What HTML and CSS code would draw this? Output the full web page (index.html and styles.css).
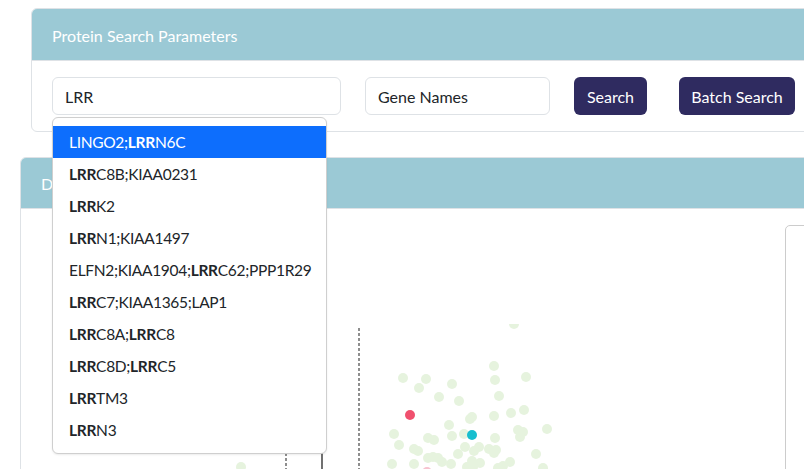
FILE: index.html
```html
<!DOCTYPE html>
<html>
<head>
<meta charset="utf-8">
<link rel="stylesheet" href="styles.css">
</head>
<body>
<div class="page">
  <section class="card card-search">
    <header class="card-header">Protein Search Parameters</header>
    <div class="card-body search-row">
      <div class="field field-main">
        <input class="input" type="text" value="LRR">
        <ul class="dropdown">
          <li class="item active">LINGO2;<b>LRR</b>N6C</li>
          <li class="item"><b>LRR</b>C8B;KIAA0231</li>
          <li class="item"><b>LRR</b>K2</li>
          <li class="item"><b>LRR</b>N1;KIAA1497</li>
          <li class="item">ELFN2;KIAA1904;<b>LRR</b>C62;PPP1R29</li>
          <li class="item"><b>LRR</b>C7;KIAA1365;LAP1</li>
          <li class="item"><b>LRR</b>C8A;<b>LRR</b>C8</li>
          <li class="item"><b>LRR</b>C8D;<b>LRR</b>C5</li>
          <li class="item"><b>LRR</b>TM3</li>
          <li class="item"><b>LRR</b>N3</li>
        </ul>
      </div>
      <input class="input input-type" type="text" value="Gene Names">
      <button class="btn btn-search">Search</button>
      <button class="btn btn-batch">Batch Search</button>
    </div>
  </section>

  <section class="card card-results">
    <header class="card-header">Differential Expression Analysis</header>
    <div class="card-body results-body">
      <svg class="plot" width="764" height="262" viewBox="0 0 764 262">
        <defs>
          <clipPath id="area"><rect x="0" y="115" width="764" height="160"/></clipPath>
        </defs>
        <line class="axis-dash" x1="265" y1="119" x2="265" y2="262"/>
        <line class="axis-solid" x1="301" y1="119" x2="301" y2="262"/>
        <line class="axis-dash" x1="338" y1="119" x2="338" y2="262"/>
        <g clip-path="url(#area)" class="pts">
          <circle cx="493" cy="115" r="5"/>
          <circle cx="382" cy="169" r="5"/>
          <circle cx="405" cy="170" r="5"/>
          <circle cx="398" cy="179" r="5"/>
          <circle cx="431" cy="175" r="5"/>
          <circle cx="418" cy="188" r="5"/>
          <circle cx="438" cy="192" r="5"/>
          <circle cx="473" cy="157" r="5"/>
          <circle cx="474" cy="171" r="5"/>
          <circle cx="505" cy="168" r="5"/>
          <circle cx="478" cy="187" r="5"/>
          <circle cx="473" cy="207" r="5"/>
          <circle cx="490" cy="204" r="5"/>
          <circle cx="503" cy="201" r="5"/>
          <circle cx="451" cy="208" r="5"/>
          <circle cx="449" cy="210" r="5"/>
          <circle cx="428" cy="216" r="5"/>
          <circle cx="373" cy="225" r="5"/>
          <circle cx="407" cy="229" r="5"/>
          <circle cx="413" cy="231" r="5"/>
          <circle cx="431" cy="227" r="5"/>
          <circle cx="443" cy="225" r="5"/>
          <circle cx="474" cy="229" r="5"/>
          <circle cx="497" cy="221" r="5"/>
          <circle cx="502" cy="223" r="5"/>
          <circle cx="499" cy="228" r="5"/>
          <circle cx="526" cy="220" r="5"/>
          <circle cx="378" cy="236" r="5"/>
          <circle cx="393" cy="240" r="5"/>
          <circle cx="397" cy="242" r="5"/>
          <circle cx="444" cy="238" r="5"/>
          <circle cx="458" cy="238" r="5"/>
          <circle cx="453" cy="242" r="5"/>
          <circle cx="468" cy="240" r="5"/>
          <circle cx="475" cy="241" r="5"/>
          <circle cx="473" cy="244" r="5"/>
          <circle cx="437" cy="245" r="5"/>
          <circle cx="515" cy="245" r="5"/>
          <circle cx="407" cy="249" r="5"/>
          <circle cx="412" cy="248" r="5"/>
          <circle cx="417" cy="249" r="5"/>
          <circle cx="421" cy="253" r="5"/>
          <circle cx="430" cy="255" r="5"/>
          <circle cx="451" cy="252" r="5"/>
          <circle cx="459" cy="254" r="5"/>
          <circle cx="489" cy="253" r="5"/>
          <circle cx="482" cy="257" r="5"/>
          <circle cx="371" cy="255" r="5"/>
          <circle cx="393" cy="255" r="5"/>
          <circle cx="522" cy="259" r="5"/>
          <circle cx="446" cy="258" r="5"/>
          <circle cx="452" cy="258" r="5"/>
          <circle cx="477" cy="259" r="5"/>
          <circle cx="220" cy="258" r="5"/>
          <circle class="pt-pink" cx="406" cy="263" r="5"/>
          <circle class="pt-red" cx="389" cy="206" r="5"/>
          <circle class="pt-cyan" cx="451" cy="226" r="5"/>
        </g>
      </svg>
      <div class="side-panel"></div>
    </div>
  </section>
</div>
</body>
</html>
```

FILE: styles.css
```css
* { box-sizing: border-box; }

html, body {
  margin: 0;
  padding: 0;
  background: #ffffff;
  overflow: hidden;
}

body {
  font-family: "Lato", "Open Sans", "Liberation Sans", sans-serif;
  font-size: 16px;
  color: #212529;
}

.page {
  padding-top: 8px;
  width: 804px;
  height: 469px;
  overflow: hidden;
}

.card {
  border: 1px solid #dee2e6;
  border-radius: 6px;
  background: #fff;
}

.card-header {
  height: 52px;
  background: #9bc9d5;
  border-bottom: 1px solid #dee2e6;
  border-radius: 5px 5px 0 0;
  color: #ffffff;
  padding: 2px 20px 0;
  line-height: 49px;
  font-size: 16px;
}

.card-search {
  margin-left: 31px;
  width: 800px;
}

.search-row {
  display: flex;
  align-items: center;
  padding: 16px 20px;
}

.field {
  position: relative;
}

.input {
  display: block;
  height: 38px;
  border: 1px solid #dee2e6;
  border-radius: 6px;
  padding: 0 12px;
  font: inherit;
  color: #212529;
  background: #fff;
  outline: none;
}

.field-main .input { width: 289px; }

.input-type {
  width: 185px;
  margin-left: 24px;
}

.btn {
  height: 38px;
  border: none;
  border-radius: 6px;
  background: #2f2b60;
  color: #fff;
  font: inherit;
  padding: 0;
}

.btn-search { width: 73px; margin-left: 24px; }
.btn-batch { width: 116px; margin-left: 32px; }

.dropdown {
  position: absolute;
  z-index: 10;
  top: 40px;
  left: 0;
  width: 275px;
  margin: 0;
  padding: 8px 0 7px;
  list-style: none;
  background: #fff;
  border: 1px solid #cfcfcf;
  border-radius: 6px;
  box-shadow: 0 1px 2px rgba(0,0,0,0.08);
}

.item {
  height: 32px;
  line-height: 32px;
  padding: 0 16px;
  white-space: nowrap;
  color: #212529;
  font-size: 15.5px;
  letter-spacing: -0.3px;
}

.item b { font-weight: 700; }

.item.active {
  background: #0d6efd;
  color: #fff;
}

.card-results {
  margin-top: 25px;
  margin-left: 20px;
  width: 800px;
  height: 330px;
}

.card-results .card-header { height: 51px; padding-top: 2px; line-height: 48px; }

.results-body {
  display: flex;
  align-items: flex-start;
}

.plot { display: block; flex: none; }

.axis-dash {
  stroke: #444;
  stroke-width: 1.2;
  stroke-dasharray: 3 2;
}

.axis-solid {
  stroke: #111;
  stroke-width: 1.2;
}

.pts circle { fill: #e6f3de; }
.pts .pt-red { fill: #f0506e; }
.pts .pt-cyan { fill: #17becf; }
.pts .pt-pink { fill: #f7c3cf; }

.side-panel {
  margin-top: 16px;
  width: 200px;
  height: 300px;
  border: 1px solid #cccccc;
  border-radius: 5px;
}
```
